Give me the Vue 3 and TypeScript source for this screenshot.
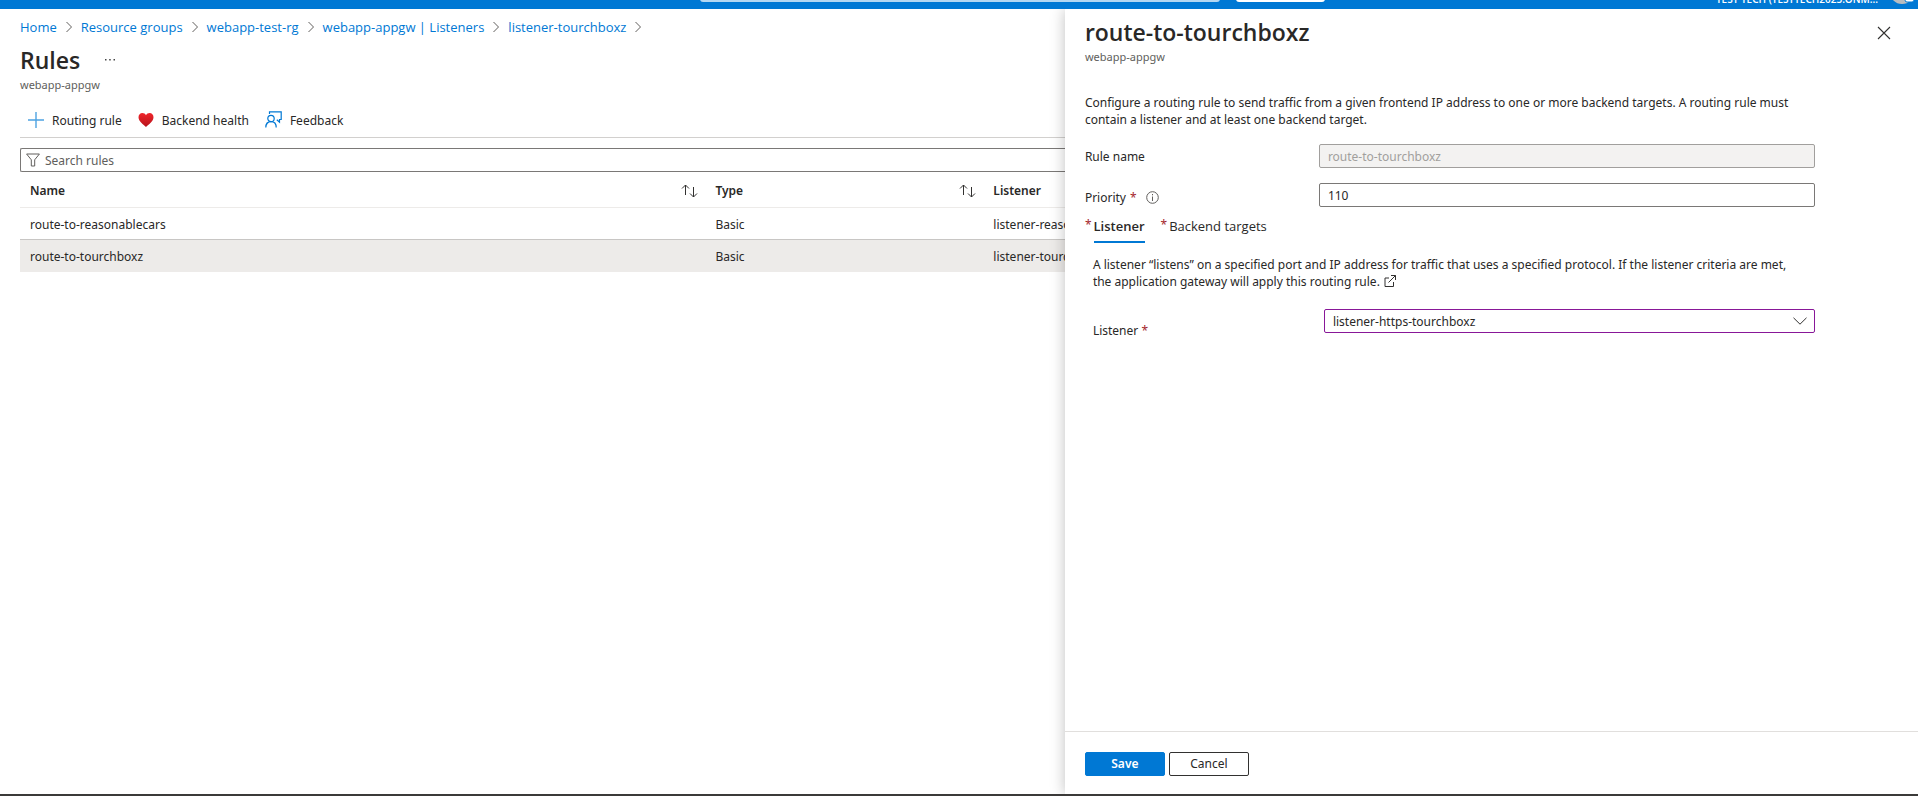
<script setup lang="ts">
import { ref } from 'vue'

interface Rule {
  name: string
  type: string
  listener: string
}

const crumbs: string[] = ['Home', 'Resource groups', 'webapp-test-rg', 'webapp-appgw | Listeners', 'listener-tourchboxz']

const rules: Rule[] = [
  { name: 'route-to-reasonablecars', type: 'Basic', listener: 'listener-reasonablecars' },
  { name: 'route-to-tourchboxz', type: 'Basic', listener: 'listener-tourchboxz' },
]

const selected = ref('route-to-tourchboxz')
const search = ref('')
const ruleName = ref('route-to-tourchboxz')
const priority = ref('110')
const activeTab = ref('Listener')
const tabs: string[] = ['Listener', 'Backend targets']
const listener = ref('listener-https-tourchboxz')
</script>

<template>
  <div class="portal">
    <header class="topbar">
      <div class="topbar-inner">
        <div class="top-search"></div>
        <div class="top-copilot"></div>
        <div class="account">
          <span class="tenant">TEST TECH (TESTTECH2023.ONM...</span>
          <svg class="avatar" width="28" height="28" viewBox="0 0 28 28" aria-hidden="true">
            <circle cx="12" cy="12" r="12" fill="#b8bcc0" />
            <rect x="15" y="13" width="9" height="9" rx="2" fill="#fff" stroke="#0078d4" />
          </svg>
        </div>
      </div>
    </header>

    <main class="page">
      <nav class="crumbs" aria-label="Breadcrumb">
        <template v-for="c in crumbs" :key="c">
          <a href="#">{{ c }}</a>
          <svg width="6" height="12" viewBox="0 0 6 12" aria-hidden="true">
            <path d="M.5 1l5 5-5 5" fill="none" stroke="#605e5c" />
          </svg>
        </template>
      </nav>
      <div class="title-row">
        <h1>Rules</h1>
        <button class="more" aria-label="More">
          <svg width="12" height="4" viewBox="0 0 12 4" fill="#444">
            <rect x="1" y="1" width="1.5" height="1.5" /><rect x="5.2" y="1" width="1.5" height="1.5" /><rect x="9.5" y="1" width="1.5" height="1.5" />
          </svg>
        </button>
      </div>
      <p class="sub">webapp-appgw</p>

      <div class="commands">
        <button>
          <svg width="16" height="16" viewBox="0 0 16 16"><path d="M8 0v16M0 8h16" stroke="#4ea3e2" stroke-width="1.4" /></svg>
          <span>Routing rule</span>
        </button>
        <button>
          <svg width="16" height="16" viewBox="0 0 16 16">
            <defs><linearGradient id="heart" x1="0" y1="0" x2="0" y2="1"><stop offset="0" stop-color="#f0262b" /><stop offset="1" stop-color="#b5121b" /></linearGradient></defs>
            <path d="M8 15C5.500 12.500.5 9.600.5 5.300.5 2.700 2.200 1 4.300 1 6 1 7.300 1.900 8 3.200 8.700 1.900 10 1 11.700 1c2.100 0 3.800 1.700 3.800 4.300C15.500 9.600 10.500 12.500 8 15z" fill="url(#heart)" />
          </svg>
          <span>Backend health</span>
        </button>
        <button>
          <svg width="17" height="17" viewBox="0 0 17 17" fill="none" stroke="#0078d4" stroke-width="1.2">
            <path d="M4.500 3V.8h11.700v7.700h-1.700v2.700l-2.700-2.500" /><circle cx="6" cy="7.500" r="3.200" /><path d="M.8 16.500c0-3.500 2-5.800 5.200-5.800s5.200 2.300 5.200 5.800" />
          </svg>
          <span>Feedback</span>
        </button>
      </div>

      <label class="search">
        <svg width="14" height="14" viewBox="0 0 14 14"><path d="M.6 1h12.800L8.700 6.800V13H5.300V6.800z" fill="none" stroke="#605e5c" /></svg>
        <input v-model="search" type="text" placeholder="Search rules" aria-label="Search rules" />
      </label>

      <table>
        <colgroup><col class="c-name" /><col class="c-type" /><col /></colgroup>
        <thead>
          <tr>
            <th v-for="h in ['Name', 'Type']" :key="h" scope="col">
              <div class="th">
                {{ h }}
                <button :aria-label="'Sort by ' + h">
                  <svg width="18" height="14" viewBox="0 0 18 14" fill="none" stroke="#323130"><path d="M4.500 11V1M1 4.500L4.500 1 8 4.500M12.500 3v10M9 9.500l3.500 3.500L16 9.500" /></svg>
                </button>
              </div>
            </th>
            <th scope="col">Listener</th>
          </tr>
        </thead>
        <tbody>
          <tr v-for="r in rules" :key="r.name" :class="{ selected: r.name === selected }" @click="selected = r.name">
            <td>{{ r.name }}</td>
            <td>{{ r.type }}</td>
            <td>{{ r.listener }}</td>
          </tr>
        </tbody>
      </table>
    </main>

    <aside class="panel">
      <div class="panel-body">
        <div class="panel-head">
          <div>
            <h2>route-to-tourchboxz</h2>
            <p class="sub">webapp-appgw</p>
          </div>
          <button class="close" aria-label="Close">
            <svg width="14" height="14" viewBox="0 0 14 14"><path d="M1 1l12 12M13 1L1 13" stroke="#323130" stroke-width="1.100" /></svg>
          </button>
        </div>
        <form class="form" @submit.prevent>
          <p class="text">Configure a routing rule to send traffic from a given frontend IP address to one or more backend targets. A routing rule must contain a listener and at least one backend target.</p>
          <div class="field">
            <label for="rule-name">Rule name</label>
            <input id="rule-name" v-model="ruleName" type="text" disabled />
          </div>
          <div class="field">
            <label for="priority" class="low">Priority <span class="req">*</span>
              <svg class="info" width="13" height="13" viewBox="0 0 13 13"><circle cx="6.500" cy="6.500" r="5.800" fill="none" stroke="#605e5c" /><path d="M6.500 5.500V10M6.500 3v1.300" stroke="#605e5c" /></svg>
            </label>
            <input id="priority" v-model="priority" type="text" />
          </div>
          <div class="tabs" role="tablist">
            <button v-for="t in tabs" :key="t" type="button" role="tab" :aria-selected="activeTab === t" @click="activeTab = t">
              <span class="req">*</span><span class="tab-text">{{ t }}</span>
            </button>
          </div>
          <section class="tab-body">
            <p class="text">A listener “listens” on a specified port and IP address for traffic that uses a specified protocol. If the listener criteria are met, the application gateway will apply this routing rule.<a href="#" aria-label="Learn more"><svg width="12" height="12" viewBox="0 0 12 12" fill="none" stroke="#323130"><path d="M5 3H1v8.500h8.500V7M7 .5h4.500V5M11.500.5l-7 7" /></svg></a></p>
            <div class="field">
              <label for="listener" class="lower">Listener <span class="req">*</span></label>
              <div class="select">
                <select id="listener" v-model="listener">
                  <option>listener-https-tourchboxz</option>
                </select>
                <svg width="14" height="8" viewBox="0 0 14 8"><path d="M.5.8L7 7.200 13.500.8" fill="none" stroke="#323130" /></svg>
              </div>
            </div>
          </section>
        </form>
      </div>
      <footer class="panel-foot">
        <button class="primary">Save</button>
        <button>Cancel</button>
      </footer>
    </aside>
  </div>
</template>

<style>
body {
  margin: 0;
}
</style>

<style scoped>
.portal {
  position: relative;
  display: flex;
  flex-direction: column;
  box-sizing: border-box;
  min-height: 100vh;
  overflow: hidden;
  border-bottom: 2px solid #3b3a39;
  background: #fff;
  color: #292827;
  font-family: "Noto Sans", "Open Sans", sans-serif;
  font-size: 12px;
  line-height: 17px;
}
h1, h2, p {
  margin: 0;
}
button, input, select {
  font: inherit;
  color: inherit;
}
button {
  padding: 0;
  border: 0;
  background: none;
}
svg {
  display: block;
  flex: none;
}
.topbar {
  display: flex;
  align-items: flex-end;
  height: 9px;
  overflow: hidden;
  background: #0078d4;
}
.topbar-inner {
  display: grid;
  grid-template-columns: 700fr 520fr 16px 89px 593fr;
  flex: 1;
  align-items: center;
  height: 40px;
}
.top-search, .top-copilot {
  height: 26px;
  border-radius: 3px;
  background: #b3d7f2;
}
.top-search {
  grid-column: 2;
}
.top-copilot {
  grid-column: 4;
  background: #fff;
}
.account {
  display: flex;
  justify-content: flex-end;
  align-items: center;
  gap: 12px;
  color: #fff;
}
.tenant {
  padding-top: 20px;
  font-family: "Open Sans", sans-serif;
  font-size: 10px;
  font-weight: 600;
  line-height: 16px;
}
.avatar {
  margin-top: 10px;
}
.page {
  width: 55.52%;
  box-sizing: border-box;
  padding: 8px 0 0 20px;
  overflow: hidden;
}
.crumbs {
  display: flex;
  align-items: center;
  gap: 9px;
  font-family: "Open Sans", sans-serif;
  font-size: 13px;
  line-height: 20px;
}
.crumbs a {
  color: #0078d4;
  text-decoration: none;
}
.title-row {
  display: flex;
  align-items: center;
  gap: 24px;
  margin-top: 7px;
}
h1, h2 {
  font-family: "Open Sans", sans-serif;
  font-size: 23px;
  font-weight: 600;
  line-height: 32px;
}
.sub {
  padding-top: 1px;
  color: #605e5c;
  font-size: 11px;
  line-height: 16px;
}
.commands {
  display: flex;
  gap: 16px;
  padding: 17px 8px 8px;
  border-bottom: 1px solid #d2d0ce;
}
.commands button {
  display: flex;
  align-items: center;
  gap: 8px;
}
.commands span {
  padding-top: 2px;
}
.search {
  display: flex;
  align-items: center;
  box-sizing: border-box;
  gap: 5px;
  height: 24px;
  margin-top: 10px;
  padding: 0 5px;
  border: 1px solid #7a7876;
  border-right: 0;
  border-radius: 2px 0 0 2px;
}
.search input {
  flex: 1;
  border: 0;
  outline: 0;
  padding: 0;
}
.search input::placeholder {
  color: #605e5c;
}
table {
  width: 100%;
  table-layout: fixed;
  border-collapse: separate;
  border-spacing: 0;
}
.c-name {
  width: 65.6%;
}
.c-type {
  width: 26.6%;
}
th, td {
  box-sizing: border-box;
  height: 32px;
  padding: 2px 6px 0 10px;
  border-bottom: 1px solid #c8c6c4;
  overflow: hidden;
  text-align: left;
  white-space: nowrap;
}
th:last-child, td:last-child {
  padding-right: 0;
}
th {
  height: 36px;
  border-color: #edebe9;
  font-weight: 600;
}
.th {
  display: flex;
  justify-content: space-between;
  align-items: center;
}
.selected td {
  border-color: #edebe9;
  background: #edebe9;
}
.panel {
  position: absolute;
  top: 9px;
  right: 0;
  bottom: 0;
  display: flex;
  flex-direction: column;
  width: 44.48%;
  background: #fff;
  box-shadow: 0 0 14px rgba(0, 0, 0, 0.25);
  clip-path: inset(0 0 0 -30px);
}
.panel-body {
  flex: 1;
  padding: 7px 20px 0;
}
.panel-head {
  display: flex;
  justify-content: space-between;
  align-items: flex-start;
}
.close {
  padding: 10px 7px;
}
.form {
  padding: 29px 83px 0 0;
}
.text {
  max-width: 708px;
}
.field {
  display: grid;
  grid-template-columns: 234px 1fr;
  align-items: center;
  margin-top: 15px;
}
.form > .text + .field {
  margin-top: 16px;
}
.field input, .field select {
  box-sizing: border-box;
  width: 100%;
  height: 24px;
  padding: 0 8px;
  border: 1px solid #7a7876;
  border-radius: 2px;
  background: #fff;
  outline: 0;
}
.field input:disabled {
  border-color: #a19f9d;
  background: #f3f2f1;
  color: #a19f9d;
}
.low {
  display: flex;
  align-items: center;
  gap: 4px;
  padding-top: 4px;
}
.info {
  margin-left: 5px;
}
.req {
  color: #a4262c;
}
.tabs {
  display: flex;
  gap: 16px;
  margin-top: 9px;
}
.tabs button {
  display: flex;
  gap: 2px;
}
.tab-text {
  padding: 2px 0 6px;
  border-bottom: 2px solid transparent;
  font-family: "Open Sans", sans-serif;
  font-size: 13px;
}
[aria-selected="true"] .tab-text {
  border-color: #0078d4;
  font-weight: 600;
}
.tab-body {
  padding: 13px 0 0 8px;
}
.text a {
  display: inline-block;
  margin-left: 4px;
  line-height: 12px;
  vertical-align: -1px;
}
.tab-body .field {
  grid-template-columns: 231px 1fr;
  margin-top: 16px;
}
.lower {
  padding-top: 16px;
}
.select {
  display: grid;
  align-items: center;
  align-self: start;
  padding-top: 3px;
}
.select > * {
  grid-area: 1 / 1;
}
.select select {
  appearance: none;
  border-color: #881798;
}
.select svg {
  justify-self: end;
  margin-right: 8px;
  pointer-events: none;
}
.panel-foot {
  display: flex;
  gap: 4px;
  padding: 20px 20px 18px;
  border-top: 1px solid #e1dfdd;
}
.panel-foot button {
  box-sizing: border-box;
  width: 80px;
  height: 24px;
  padding-bottom: 2px;
  border: 1px solid #323130;
  border-radius: 2px;
}
.panel-foot .primary {
  border-color: #0078d4;
  background: #0078d4;
  color: #fff;
  font-weight: 600;
}
</style>
